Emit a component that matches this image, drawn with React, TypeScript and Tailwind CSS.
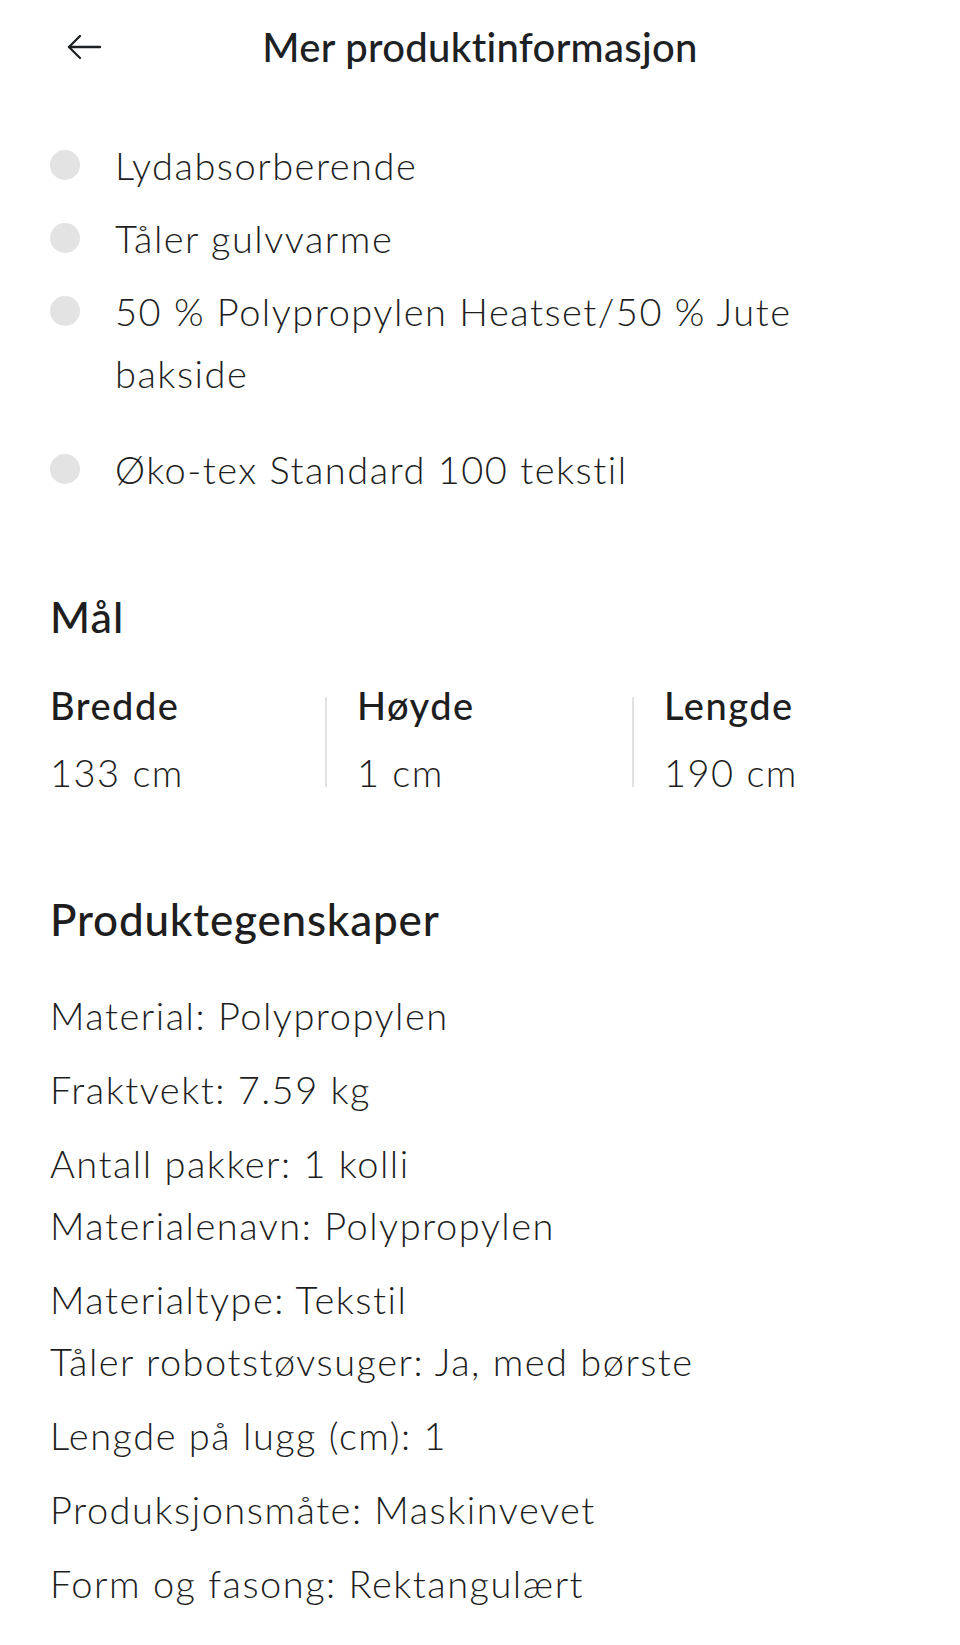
const bullets = [
  { text: "Lydabsorberende", gap: "mb-[11px]" },
  { text: "Tåler gulvvarme", gap: "mb-[11px]" },
  { text: "50 % Polypropylen Heatset/50 % Jute bakside", gap: "mb-[34px]" },
  { text: "Øko-tex Standard 100 tekstil", gap: "" },
];

const dimensions = [
  { label: "Bredde", value: "133 cm" },
  { label: "Høyde", value: "1 cm" },
  { label: "Lengde", value: "190 cm" },
];

// some entries share one paragraph, so they sit closer together
const properties = [
  ["Material: Polypropylen"],
  ["Fraktvekt: 7.59 kg"],
  ["Antall pakker: 1 kolli", "Materialenavn: Polypropylen"],
  ["Materialtype: Tekstil", "Tåler robotstøvsuger: Ja, med børste"],
  ["Lengde på lugg (cm): 1"],
  ["Produksjonsmåte: Maskinvevet"],
  ["Form og fasong: Rektangulært"],
  ["Artikkelnummer: 200758"],
];

function BackArrow() {
  return (
    <svg width="34" height="24" viewBox="0 0 34 24" fill="none" stroke="currentColor" strokeWidth="2.3" strokeLinecap="round" strokeLinejoin="round">
      <path d="M33 12H2" />
      <path d="M13 1 2 12l11 11" />
    </svg>
  );
}

function Dimension({ label, value }: { label: string; value: string }) {
  return (
    <div className="flex flex-col">
      <span className="text-[38px] font-medium leading-[48px] tracking-[1.5px] text-[#1e1e1e]">{label}</span>
      <span className="mt-[17px] text-[38px] font-light leading-[52px] tracking-[1.5px] text-[#1e1e1e]">{value}</span>
    </div>
  );
}

export default function App() {
  return (
    <div className="min-h-[1645px] overflow-hidden bg-white font-['Lato',sans-serif] text-[#1e1e1e]">
      <header className="grid h-[94px] grid-cols-[1fr_auto_1fr] items-center">
        <button className="ml-[67px] flex h-[24px] w-[34px] items-center text-[#1d2124]">
          <BackArrow />
        </button>
        <h1 className="text-[40px] font-medium leading-[50px] tracking-[0.3px] text-[#1d2124]">Mer produktinformasjon</h1>
        <div />
      </header>

      <section className="px-[50px]">
        <ul className="mt-[40px]">
          {bullets.map((item) => (
            <li key={item.text} className={`flex items-start ${item.gap}`}>
              <span className="mt-[16px] h-[30px] w-[30px] shrink-0 rounded-full bg-[#e3e3e3]" />
              <span className="ml-[35px] max-w-[700px] text-[38px] font-light leading-[62px] tracking-[1.5px]">{item.text}</span>
            </li>
          ))}
        </ul>

        <h2 className="mt-[91px] text-[43px] font-medium leading-[52px] tracking-[1px]">Mål</h2>
        <div className="mt-[38px] flex">
          {dimensions.map((dim, i) =>
            i === 0 ? (
              <div key={dim.label} className="w-[275px] shrink-0">
                <Dimension {...dim} />
              </div>
            ) : (
              <div key={dim.label} className="flex w-[307px] shrink-0">
                <div className="mt-[16px] h-[90px] w-[2px] shrink-0 bg-[#e2e2e2]" />
                <div className="pl-[30px]">
                  <Dimension {...dim} />
                </div>
              </div>
            ),
          )}
        </div>

        <h2 className="mt-[93px] text-[44px] font-medium leading-[56px] tracking-[0.8px]">Produktegenskaper</h2>
        <div className="mt-[37px]">
          {properties.map((group) => (
            <p key={group[0]} className="mb-[12px] text-[38px] font-light leading-[62px] tracking-[1.5px]">
              {group.map((line, i) => (
                <span key={line}>
                  {i > 0 && <br />}
                  {line}
                </span>
              ))}
            </p>
          ))}
        </div>
      </section>
    </div>
  );
}
